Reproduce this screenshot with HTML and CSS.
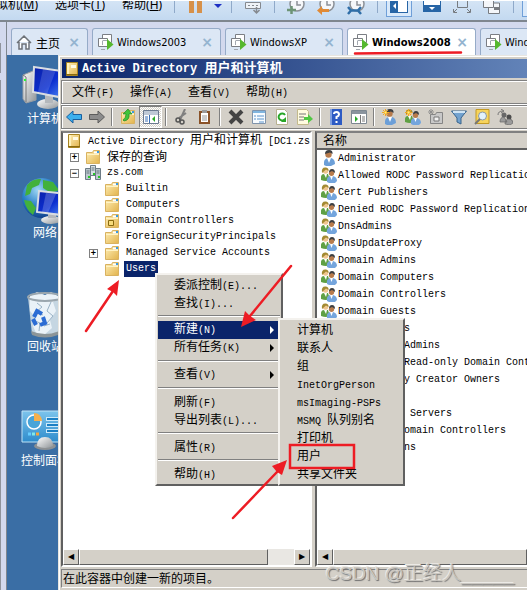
FILE: index.html
```html
<!DOCTYPE html>
<html lang="zh-CN">
<head>
    <meta charset="UTF-8">
    <meta name="viewport" content="width=device-width, initial-scale=1.0">
    <title>Windows2008</title>
    <link rel="stylesheet" href="styles.css">
</head>
<body>
    <!-- Shared icons -->
    <svg class="sprites" aria-hidden="true">
        <defs>
            <linearGradient id="gold" x1="0" y1="0" x2="1" y2="1"><stop offset="0" stop-color="#fff0b8"/><stop offset="1" stop-color="#e2b34c"/></linearGradient>
            <linearGradient id="screen" x1="0" y1="0" x2="1" y2="1"><stop offset="0" stop-color="#0a1fa8"/><stop offset=".5" stop-color="#0c2fd0"/><stop offset="1" stop-color="#5fa0ff"/></linearGradient>
            <linearGradient id="panel" x1="0" y1="0" x2="0" y2="1"><stop offset="0" stop-color="#7cc4ec"/><stop offset="1" stop-color="#2f8ccc"/></linearGradient>
            <radialGradient id="globe" cx=".4" cy=".3" r=".8"><stop offset="0" stop-color="#9fd8f4"/><stop offset=".5" stop-color="#2a7fc8"/><stop offset="1" stop-color="#0b2f7a"/></radialGradient>
            <linearGradient id="metal" x1="0" y1="0" x2="1" y2="1"><stop offset="0" stop-color="#fff"/><stop offset="1" stop-color="#8f9498"/></linearGradient>
        </defs>
        <symbol id="folder" viewBox="0 0 16 16">
            <path d="M1.500 3.500h6l1-2h6v13h-13z" fill="url(#gold)" stroke="#d9b260"/>
            <path d="M9 2.500h5v2H9z" fill="#fff"/><path d="M12 2h2v2h-2z" fill="#3a9be0"/>
            <path d="M2 5.500h12" stroke="#fff3c4"/>
        </symbol>
        <symbol id="book" viewBox="0 0 16 16">
            <path d="M2.500 1.500h11v13h-11z" fill="url(#gold)" stroke="#a88420"/>
            <path d="M3 2h2v11H3z" fill="#fff2bc"/><path d="M7 4h5v3H7z" fill="#fffbe6"/>
            <path d="M2 13.500h12" stroke="#8a6a10"/>
        </symbol>
        <symbol id="domain" viewBox="0 0 16 16">
            <path d="M5.500.5h5v10h-5z" fill="#d8e0e4" stroke="#6d7c86"/>
            <path d="M.5 3.500h5v11h-5zM10.500 3.500h5v11h-5z" fill="#bcc8ce" stroke="#6d7c86"/>
            <path d="M1.500 6h3M1.500 8h3M11.500 6h3M11.500 8h3M6.500 3h3M6.500 5h3" stroke="#66767f"/>
            <path d="M3 11h2v2H3zM13 11h2v2h-2zM8 8h2v2H8z" fill="#28c828"/>
        </symbol>
        <symbol id="user" viewBox="0 0 16 16">
            <path d="M3 15q-1-6 4-7h3q4 1 4 6l-4 2H5z" fill="#6c9fd8"/>
            <path d="M6 8l2 5 2-5z" fill="#fff"/>
            <circle cx="7.500" cy="4.500" r="3.200" fill="#b87b4c"/>
            <path d="M4 4q0-4 4-4t3.500 4L9 2.500z" fill="#3d3f42"/>
        </symbol>
        <symbol id="group" viewBox="0 0 16 16">
            <path d="M0 13q-1-6 3-6h4l2 6q-4 2-9 0z" fill="#5fa044"/>
            <path d="M3 7l2 4 1-4z" fill="#fff"/>
            <circle cx="4.500" cy="4" r="2.800" fill="#efc690"/>
            <path d="M1 6q-1-6 4-5.500Q8 1 7.500 4L5 2.500z" fill="#a38a32"/>
            <path d="M6 15q-1-5 3-6h3q4 1 4 5l-2 2H8z" fill="#74a5dd"/>
            <path d="M9 9l1.500 4L12 9z" fill="#fff"/>
            <circle cx="10.500" cy="6.300" r="2.600" fill="#b87b4c"/>
            <path d="M8 5.500q0-3.500 3-3.500t3 4l-3-2z" fill="#3d3f42"/>
        </symbol>
        <symbol id="spark" viewBox="0 0 16 16">
            <path d="M3.500 0v7M0 3.500h7M1 1l5 5M6 1L1 6" stroke="#f5a81c"/><path d="M2.500 2.500h2v2h-2z" fill="#fff27a"/>
        </symbol>
        <symbol id="vm" viewBox="0 0 18 18">
            <g fill="#fff" stroke="#7b7e84"><path d="M5.500 1.500h9v8h-9z"/><path d="M1.500 5.500h9v8h-9z"/></g>
            <path d="M5.500 7.500h5M5.500 8v4M8 16.500H4" stroke="#a3a8b0" fill="none"/>
            <path d="M10 6l6.500 5.500L10 17z" fill="#55b82e"/>
        </symbol>
        <symbol id="clock" viewBox="0 0 18 20">
            <circle cx="10" cy="3" r="7" fill="#f5f7fa" stroke="#8c9096" stroke-width="1.500"/>
            <path d="M10 0v4h4" fill="none" stroke="#8c9096" stroke-width="1.500"/>
        </symbol>
    </svg>

    <header class="vm-toolbar">
        <nav class="vm-menu">
            <button>拟机(<u>M</u>)</button>
            <button>选项卡(<u>T</u>)</button>
            <button>帮助(<u>H</u>)</button>
        </nav>
        <span class="vm-sep"></span>
        <button class="vm-btn" aria-label="Pause"><svg width="14" height="20"><path d="M0 0h5v12H0zM8 0h5v12H8z" fill="#d7914a"/></svg></button>
        <button class="vm-btn small" aria-label="Power options"><svg width="8" height="20"><path d="M0 3h8L4 7z" fill="#1d2fc4"/></svg></button>
        <span class="vm-sep"></span>
        <button class="vm-btn" aria-label="Send keys"><svg width="18" height="20"><path d="M1.500 1.500h15v6h-15zM4 4.500h2M8 4.500h2M12 4.500h2" fill="#eef2f7" stroke="#85898f"/><path d="M12.500 6v6M9.500 9l3 3 3-3" fill="none" stroke="#85898f" stroke-width="1.500"/></svg></button>
        <span class="vm-sep"></span>
        <button class="vm-btn" aria-label="Take snapshot"><svg width="18" height="20"><use href="#clock"/><path d="M0 9h9M4.500 5v8" stroke="#6d9476" stroke-width="2.500"/></svg></button>
        <button class="vm-btn" aria-label="Revert snapshot"><svg width="18" height="20"><use href="#clock"/><path d="M12 11H5v3L0 9.500 5 5v3h7z" fill="#e08a35"/></svg></button>
        <button class="vm-btn" aria-label="Manage snapshots"><svg width="18" height="20"><use href="#clock"/><path d="M1 6l3 3.500L1 13M14 6l-3 3.500 3 3.500M3 9.500h9" stroke="#2f6ea8" stroke-width="2.500" fill="none"/></svg></button>
        <span class="vm-sep"></span>
        <button class="vm-btn active" aria-label="Show library"><svg width="18" height="20"><path d="M0 0h18v12H0z" fill="#2765a6"/><path d="M8 0h9v11H8z" fill="#fff"/><path d="M6 2L3 5l3 3z" fill="#fff"/></svg></button>
        <button class="vm-btn" aria-label="Thumbnail bar"><svg width="18" height="20"><path d="M0 0h18v11H0z" fill="#2765a6"/><path d="M1 0h16v4H1z" fill="#fff"/><path d="M6 6h6L9 9z" fill="#fff"/></svg></button>
        <button class="vm-btn" aria-label="Full screen"><svg width="18" height="20"><path d="M4.500 0v6.500h10V0M.5 8v3.500H4M17.500 8v3.500H14M1 11l3-3M17 11l-3-3" fill="none" stroke="#777b80"/></svg></button>
        <button class="vm-btn" aria-label="Unity"><svg width="18" height="20"><path d="M5.500 4v8.500h11V2h-6" fill="#f4f6f9" stroke="#777b80"/><path d="M.5 0v6.500h10V0" fill="#f4f6f9" stroke="#777b80"/><path d="M11 6h5v3h-5z" fill="#777b80"/></svg></button>
        <span class="vm-sep"></span>
        <button class="vm-btn active" aria-label="Console view"><svg width="18" height="20"><path d="M1.500-1h16v12h-16z" fill="#fff" stroke="#777b80"/></svg></button>
    </header>

    <div class="workspace">
        <aside class="library-edge"><span></span><span></span></aside>
        <main class="console">
            <nav class="tabs">
                <button class="tab home"><svg width="16" height="17"><path d="M1 9l7-7 7 7M3 8v7h3v-5h4v5h3V8" fill="#fff" stroke="#6d7278" stroke-width="1.500"/></svg><span>主页</span><i>×</i></button>
                <button class="tab"><svg width="18" height="18"><use href="#vm"/></svg><span>Windows2003</span><i>×</i></button>
                <button class="tab narrow"><svg width="18" height="18"><use href="#vm"/></svg><span>WindowsXP</span><i>×</i></button>
                <button class="tab current"><svg width="18" height="18"><use href="#vm"/></svg><span>Windows2008</span><i>×</i></button>
                <button class="tab"><svg width="18" height="18"><use href="#vm"/></svg><span>Windows7</span><i>×</i></button>
            </nav>

            <div class="desktop">
                <div class="desktop-icons">
                    <a href="#" class="shortcut">
                        <svg width="48" height="48">
                            <path d="M2 12l10-4 3 3v26l-10 3-3-4z" fill="url(#metal)" stroke="#9a9ea2"/><path d="M2 12l3 2v25" stroke="#777" fill="none"/><path d="M3 16h2v2H3z" fill="#2f3"/>
                            <ellipse cx="27" cy="41" rx="11" ry="5" fill="url(#metal)"/><path d="M24 32h8v8h-8z" fill="#b4b8bc"/>
                            <path d="M13 4l35 5v27l-36-7z" fill="url(#screen)" stroke="#d9dde2" stroke-width="2"/><path d="M22 6l13 1-9 24-9-2z" fill="#fff" opacity=".15"/>
                        </svg>
                        <span>计算机</span>
                    </a>
                    <a href="#" class="shortcut">
                        <svg width="48" height="48">
                            <circle cx="21" cy="21" r="20" fill="url(#globe)"/>
                            <path d="M6 8q6-7 14-6l-2 6-7 3-2 6-5 2zM22 3l10 2 6 8-8 3-8-5zM3 23l7 1 5 7-3 7q-7-5-9-15z" fill="#42b13c"/>
                            <ellipse cx="30" cy="43" rx="10" ry="4" fill="url(#metal)"/><path d="M27 34h8v7h-8z" fill="#b4b8bc"/>
                            <path d="M18 14l30 3v22l-32-4z" fill="url(#screen)" stroke="#d9dde2" stroke-width="2"/><path d="M25 16l10 1-8 19-6-1z" fill="#fff" opacity=".2"/>
                        </svg>
                        <span>网络</span>
                    </a>
                    <a href="#" class="shortcut">
                        <svg width="48" height="48">
                            <path d="M7 6l4 37q13 6 26 0l4-37z" fill="#c5d6e2"/>
                            <path d="M9 5l7-4 8 3 6-3 9 5-7 5 3 9-6 9 2 8-8 7-8-2-3-7 3-8-6-7z" fill="#eaf2f8"/>
                            <path d="M16 12l5 4-6 5 7 3M30 11l-4 9 6 5-6 7M14 30l5 2-1 8M23 35l6-2" fill="none" stroke="#99b2c6"/>
                            <ellipse cx="24" cy="6" rx="17" ry="4" fill="none" stroke="#9aa6ae" stroke-width="2"/>
                            <path d="M10 40q14 6 28 0l-1 4q-13 5-26 0z" fill="#8c9598"/>
                            <g fill="none" stroke="#2b6cd4" stroke-width="4"><path d="M13 26l3-6 5 3"/><path d="M22 26l2 6-5 2"/><path d="M12 28l3 6"/></g>
                        </svg>
                        <span>回收站</span>
                    </a>
                    <a href="#" class="shortcut">
                        <svg width="48" height="48">
                            <path d="M1 6h47v31H1z" fill="url(#panel)" stroke="#bfe3f6"/>
                            <circle cx="13" cy="17" r="7" fill="#49a4d8" stroke="#fff" stroke-width="1.500"/><path d="M13 16V8q7 0 8 8z" fill="#f6b04c"/>
                            <path d="M25 14h23M25 20h23M25 26h23" stroke="#cdeafa" stroke-width="4"/><path d="M26 14h20M26 20h11M26 26h20" stroke="#1b7fc4" stroke-width="2"/>
                            <path d="M7 29h3" stroke="#6cf" stroke-width="3"/><path d="M11 29h3" stroke="#7fe8e8" stroke-width="3"/><path d="M15 29h3" stroke="#f5a53c" stroke-width="3"/>
                            <ellipse cx="24" cy="41" rx="11" ry="4" fill="#8d9194"/><path d="M16 41q0-9 8-9t8 9q-8 4-16 0z" fill="url(#metal)"/>
                        </svg>
                        <span>控制面板</span>
                    </a>
                </div>

                <section class="window">
                    <h1 class="title-bar"><svg width="16" height="16"><use href="#book"/></svg><span><span class="en">Active Directory </span>用户和计算机</span></h1>
                    <nav class="menu-bar">
                        <button>文件<span class="en">(F)</span></button>
                        <button>操作<span class="en">(A)</span></button>
                        <button>查看<span class="en">(V)</span></button>
                        <button>帮助<span class="en">(H)</span></button>
                    </nav>
                    <div class="tool-bar">
                        <button aria-label="后退"><svg width="16" height="16"><path d="M.5 8L7 2v3.500h8.500v5H7V14z" fill="#3cb0ee" stroke="#1b5f9e"/></svg></button>
                        <button aria-label="前进"><svg width="16" height="16"><path d="M15.500 8L9 2v3.500H.5v5H9V14z" fill="#8c8c8c" stroke="#5c5c5c"/></svg></button>
                        <span class="sep"></span>
                        <button aria-label="上移"><svg width="16" height="16"><use href="#folder"/><path d="M4 12q6-1 5-7h3L8 0 3 5h3q0 4-3 6z" fill="#3fc43a" stroke="#22861f" stroke-width=".7"/></svg></button>
                        <button class="pressed" aria-label="显示控制台树"><svg width="16" height="16"><path d="M.5 1.500h15v13H.5z" fill="#fff" stroke="#6b7a90"/><path d="M1 3h14M1 5h14" stroke="#7f92ad"/><path d="M6.500 6v8M2 8h3M2 10h3M2 12h3" stroke="#3b6fb5"/><path d="M12 7v6l-3-3z" fill="#2aa82a"/></svg></button>
                        <span class="sep"></span>
                        <button aria-label="剪切"><svg width="16" height="16"><path d="M11 0L6 11M12 4L5 9" stroke="#808080" stroke-width="2"/><circle cx="4" cy="11" r="2" fill="none" stroke="#555" stroke-width="1.500"/><circle cx="8" cy="13" r="2" fill="none" stroke="#555" stroke-width="1.500"/></svg></button>
                        <button aria-label="复制"><svg width="16" height="16"><path d="M2 2h11v13H2z" fill="#8a5228"/><path d="M4 4h7v9H4z" fill="#fff"/><path d="M5 1h5v3H5z" fill="#9a9a9a"/><path d="M5 7h5M5 9h5M5 11h5" stroke="#999"/></svg></button>
                        <span class="sep"></span>
                        <button aria-label="删除"><svg width="16" height="16"><path d="M2 2l12 12M14 2L2 14" stroke="#444" stroke-width="4"/></svg></button>
                        <button aria-label="属性"><svg width="16" height="16"><path d="M1.500 1.500h13v13h-13z" fill="#f7fbff" stroke="#7f93ab"/><path d="M2 3h12" stroke="#80b5df" stroke-width="2"/><path d="M3 7h2M3 10h2M6 7h7M6 10h7M8 13h5" stroke="#5a94cc"/></svg></button>
                        <button aria-label="刷新"><svg width="16" height="16"><path d="M2.500.5h8l3 3v12h-11z" fill="#fff" stroke="#b6b08f"/><path d="M11 10a3.500 3.500 0 1 1 0-4" fill="none" stroke="#28a628" stroke-width="2"/><path d="M12 8v5H7z" fill="#28a628"/></svg></button>
                        <button aria-label="导出列表"><svg width="16" height="16"><path d="M.5.5h9l2 2v13H.5z" fill="#fffbe0" stroke="#c2b98c"/><path d="M2 5h7M2 8h5M2 11h5" stroke="#777"/><path d="M7 8h4V5l5 5-5 4v-3H7z" fill="#50c843"/></svg></button>
                        <span class="sep"></span>
                        <button aria-label="帮助"><svg width="16" height="16"><path d="M2 0h12v16H2z" fill="#2d5bc4"/><path d="M2 0h2v16H2z" fill="#7f9fe0"/><path d="M6 5q0-2 2.500-2T11 5.500Q11 7 8.500 8v2M8.500 12v2" fill="none" stroke="#fff" stroke-width="2"/></svg></button>
                        <button aria-label="操作窗格"><svg width="16" height="16"><path d="M.5 1.500h15v13H.5z" fill="#fff" stroke="#7c8791"/><path d="M1 3.500h14" stroke="#8a949e" stroke-width="3"/><path d="M9.500 6v8M11 8h3M11 10h3M11 12h3" stroke="#777"/><path d="M4 7v6l3-3z" fill="#2aa82a"/></svg></button>
                        <span class="sep"></span>
                        <button aria-label="新建用户"><svg width="16" height="16"><use href="#user"/><use href="#spark"/></svg></button>
                        <button aria-label="新建组"><svg width="16" height="16"><use href="#group"/><use href="#spark"/></svg></button>
                        <button aria-label="新建组织单位"><svg width="16" height="16"><path d="M2.500 5.500h5l1-2h6v11h-12z" fill="#c8c8c8" stroke="#858585"/><path d="M6 8h5v4H6z" fill="#f2f2f2" stroke="#777"/><path d="M3 0v6M0 3h6M1 1l4 4M5 1L1 5" stroke="#909090"/></svg></button>
                        <button aria-label="筛选器"><svg width="16" height="16"><path d="M.5 2h15L10 9v6l-4-2V9z" fill="#72a2cf" stroke="#38648c"/><path d="M2 3h12" stroke="#cfe4f4" stroke-width="2"/></svg></button>
                        <button aria-label="查找"><svg width="16" height="16"><path d="M2 .5h13v14H2z" fill="#f7d45c" stroke="#c39a25"/><circle cx="8.500" cy="7" r="4" fill="#e2f2fb" stroke="#8b99a5"/><path d="M6 10l-5 5" stroke="#777" stroke-width="2"/></svg></button>
                        <button aria-label="添加到组"><svg width="16" height="16"><circle cx="7" cy="6" r="2.500" fill="#686868"/><circle cx="12" cy="8" r="2.500" fill="#4c4c4c"/><path d="M3 13q0-5 4-5l3 5zM8 15q0-5 4-5t4 4l-3 2z" fill="#9a9a9a" stroke="#666" stroke-width=".7"/><path d="M1 6q0-4 5-4M4 0l3 2-3 2" fill="none" stroke="#777"/></svg></button>
                    </div>

                    <div class="panes">
                        <div class="pane tree-pane">
                            <ul class="tree">
                                <li class="root"><svg width="16" height="16"><use href="#book"/></svg><span><span class="en">Active Directory </span>用户和计算机<span class="en"> [DC1.zs</span></span></li>
                                <li><button class="expander" aria-label="展开">+</button><svg width="16" height="16"><use href="#folder"/></svg><span>保存的查询</span></li>
                                <li><button class="expander" aria-label="折叠">−</button><svg width="16" height="16"><use href="#domain"/></svg><span class="en">zs.com</span></li>
                                <li class="child"><svg width="16" height="16"><use href="#folder"/></svg><span class="en">Builtin</span></li>
                                <li class="child"><svg width="16" height="16"><use href="#folder"/></svg><span class="en">Computers</span></li>
                                <li class="child"><svg width="16" height="16"><use href="#folder"/><path d="M4.500 7.500h5v5h-5z" fill="#f8dc7c" stroke="#8a6a10"/></svg><span class="en">Domain Controllers</span></li>
                                <li class="child"><svg width="16" height="16"><use href="#folder"/></svg><span class="en">ForeignSecurityPrincipals</span></li>
                                <li class="child expandable"><button class="expander" aria-label="展开">+</button><svg width="16" height="16"><use href="#folder"/></svg><span class="en">Managed Service Accounts</span></li>
                                <li class="child"><svg width="16" height="16"><use href="#folder"/></svg><span class="en selected">Users</span></li>
                            </ul>
                            <div class="scrollbar"><button aria-label="向左">◀</button><span class="thumb"></span><span class="track"></span><button aria-label="向右">▶</button></div>
                        </div>
                        <div class="pane list-pane">
                            <table class="list">
                                <thead><tr><th>名称</th></tr></thead>
                                <tbody class="en">
                                    <tr><td><svg width="16" height="16"><use href="#user"/></svg>Administrator</td></tr>
                                    <tr><td><svg width="16" height="16"><use href="#group"/></svg>Allowed RODC Password Replication Group</td></tr>
                                    <tr><td><svg width="16" height="16"><use href="#group"/></svg>Cert Publishers</td></tr>
                                    <tr><td><svg width="16" height="16"><use href="#group"/></svg>Denied RODC Password Replication Group</td></tr>
                                    <tr><td><svg width="16" height="16"><use href="#group"/></svg>DnsAdmins</td></tr>
                                    <tr><td><svg width="16" height="16"><use href="#group"/></svg>DnsUpdateProxy</td></tr>
                                    <tr><td><svg width="16" height="16"><use href="#group"/></svg>Domain Admins</td></tr>
                                    <tr><td><svg width="16" height="16"><use href="#group"/></svg>Domain Computers</td></tr>
                                    <tr><td><svg width="16" height="16"><use href="#group"/></svg>Domain Controllers</td></tr>
                                    <tr><td><svg width="16" height="16"><use href="#group"/></svg>Domain Guests</td></tr>
                                    <tr><td><svg width="16" height="16"><use href="#group"/></svg>Domain Users</td></tr>
                                    <tr><td><svg width="16" height="16"><use href="#group"/></svg>Enterprise Admins</td></tr>
                                    <tr><td><svg width="16" height="16"><use href="#group"/></svg>Enterprise Read-only Domain Controllers</td></tr>
                                    <tr><td><svg width="16" height="16"><use href="#group"/></svg>Group Policy Creator Owners</td></tr>
                                    <tr><td><svg width="16" height="16"><use href="#user"/></svg>Guest</td></tr>
                                    <tr><td><svg width="16" height="16"><use href="#group"/></svg>RAS and IAS Servers</td></tr>
                                    <tr><td><svg width="16" height="16"><use href="#group"/></svg>Read-only Domain Controllers</td></tr>
                                    <tr><td><svg width="16" height="16"><use href="#group"/></svg>Schema Admins</td></tr>
                                </tbody>
                            </table>
                            <div class="scrollbar"><button aria-label="向左">◀</button><span class="thumb full"></span></div>
                        </div>
                    </div>
                    <footer class="status-bar">在此容器中创建一新的项目。</footer>
                </section>
            </div>
        </main>
    </div>

    <!-- Context menu of the Users container -->
    <div class="popup context-menu" role="menu">
        <button role="menuitem">委派控制<span class="en">(E)...</span></button>
        <button role="menuitem">查找<span class="en">(I)...</span></button>
        <hr>
        <button role="menuitem" class="sub highlighted"><span>新建<span class="en">(N)</span></span></button>
        <button role="menuitem" class="sub"><span>所有任务<span class="en">(K)</span></span></button>
        <hr>
        <button role="menuitem" class="sub"><span>查看<span class="en">(V)</span></span></button>
        <hr>
        <button role="menuitem">刷新<span class="en">(F)</span></button>
        <button role="menuitem">导出列表<span class="en">(L)...</span></button>
        <hr>
        <button role="menuitem">属性<span class="en">(R)</span></button>
        <hr>
        <button role="menuitem">帮助<span class="en">(H)</span></button>
    </div>
    <div class="popup new-menu" role="menu">
        <button role="menuitem">计算机</button>
        <button role="menuitem">联系人</button>
        <button role="menuitem">组</button>
        <button role="menuitem"><span class="en">InetOrgPerson</span></button>
        <button role="menuitem"><span class="en">msImaging-PSPs</span></button>
        <button role="menuitem"><span class="en">MSMQ </span>队列别名</button>
        <button role="menuitem">打印机</button>
        <button role="menuitem">用户</button>
        <button role="menuitem">共享文件夹</button>
    </div>

    <!-- Red marks: tab underline, arrows, box round 用户 -->
    <svg class="marks" width="528" height="593" aria-hidden="true">
        <g fill="none" stroke="#ed1c24" stroke-linecap="round">
            <path d="M355 53.500L400 53l61-.5" stroke-width="2.500"/>
            <path d="M86 331l27-40M291 266l-41 50M233 518l44-46" stroke-width="2.500"/>
            <path d="M290 445h64v23h-64z" stroke-width="2.500"/>
        </g>
        <g fill="#ed1c24">
            <path d="M119 280l-2 16-4-4-6-3z"/>
            <path d="M241 327l4-16 5 5 6 4z"/>
            <path d="M287 460l-5 15-5-3-5-6z"/>
        </g>
    </svg>
    <div class="watermark">CSDN @正经人_____</div>
</body>
</html>
```
FILE: styles.css
```css
* {
    box-sizing: border-box;
}

body {
    position: relative;
    display: flex;
    flex-direction: column;
    min-height: 100vh;
    margin: 0;
    padding: 1px 1px 3px 0;
    overflow: hidden;
    background-color: #fff;
    font-family: "Liberation Sans", "Noto Sans CJK SC", sans-serif;
    font-size: 12px;
    color: #000;
}

button {
    margin: 0;
    padding: 0;
    border: none;
    background: none;
    font: inherit;
    color: inherit;
    white-space: nowrap;
}

svg {
    flex: none;
}

/* Latin text beside 12px Chinese text */
.en {
    font-family: "Liberation Mono", monospace;
    font-size: 10px;
    white-space: pre;
}

.sprites {
    position: absolute;
    width: 0;
    height: 0;
}

/* Virtual machine toolbar */
.vm-toolbar {
    display: flex;
    height: 21px;
    overflow: hidden;
    background: linear-gradient(#d4e4f5, #c3d9f0);
    border-bottom: 2px solid #7f868f;
}

.vm-menu {
    display: flex;
    gap: 17px;
    width: 172px;
    flex: none;
    margin: -5px 0 0 -4px;
    font-family: "Noto Sans", "Noto Sans CJK SC", sans-serif;
    line-height: 18px;
}

.vm-menu button {
    display: block;
    height: 18px;
}

.vm-sep {
    flex: none;
    width: 1px;
    height: 12px;
    margin: 0 6px;
    background-color: #8fa9c9;
}

.vm-btn {
    display: flex;
    justify-content: center;
    flex: none;
    width: 30px;
    height: 17px;
}

.vm-btn.small {
    width: 14px;
}

.vm-btn.active {
    width: 26px;
    height: 16px;
    margin-right: 5px;
    margin-left: 2px;
    border: 1px solid #6f9fd8;
    border-top: none;
    background-color: #d9e9fa;
}

.workspace {
    display: flex;
    flex: 1;
    background-color: #d3d9ee;
}

.library-edge {
    display: flex;
    flex-direction: column;
    gap: 7px;
    width: 7px;
    padding-top: 21px;
    border-right: 1px solid #7f868f;
}

.library-edge span {
    width: 1px;
    height: 30px;
    background-color: #8f939c;
}

.library-edge span:last-child {
    flex: 1;
}

.console {
    display: flex;
    flex-direction: column;
    flex: 1;
    min-width: 0;
}

.tabs {
    display: flex;
    gap: 4px;
    padding: 6px 0 0 4px;
    overflow: hidden;
}

.tab {
    display: flex;
    align-items: center;
    gap: 2px;
    flex: none;
    width: 129px;
    height: 27px;
    padding: 0 7px 0 4px;
    border: 1px solid #96abc8;
    border-bottom: none;
    border-radius: 3px 3px 0 0;
    background-color: #dce7f5;
    font-family: "DejaVu Sans Condensed", "DejaVu Sans", sans-serif;
    font-size: 11px;
}

.tab.home {
    gap: 4px;
    width: 77px;
    font-family: "Noto Sans CJK SC", sans-serif;
    font-size: 12px;
}

.tab.narrow {
    width: 118px;
}

.tab.current {
    background-color: #fff;
    font-family: "DejaVu Sans", sans-serif;
    font-weight: bold;
    font-size: 10px;
}

.tab i {
    margin-left: auto;
    font-family: "DejaVu Sans", sans-serif;
    font-style: normal;
    font-weight: bold;
    font-size: 14px;
    color: #94b4d0;
}

/* Guest desktop */
.desktop {
    display: flex;
    flex: 1;
    background-color: #3a6ea5;
}

.desktop-icons {
    display: flex;
    flex-direction: column;
    gap: 50px;
    flex: none;
    width: 51px;
    padding-top: 8px;
    overflow: hidden;
}

.shortcut {
    display: flex;
    flex-direction: column;
    align-items: center;
    width: 76px;
    color: #fff;
    line-height: 16px;
    text-decoration: none;
}

.window {
    display: flex;
    flex-direction: column;
    flex: 1;
    min-width: 0;
    padding: 2px 0 2px 2px;
    border-top: 1px solid #e8e6e0;
    border-left: 1px solid #e8e6e0;
    box-shadow: inset 1px 1px #fff;
    background-color: #d4d0c8;
}

.title-bar {
    display: flex;
    align-items: center;
    height: 19px;
    margin: 1px 0 2px 1px;
    padding-left: 2px;
    background: linear-gradient(to right, #0a246a, #6283b8);
    font-size: 13px;
    line-height: 19px;
    color: #fff;
}

.title-bar svg {
    margin-right: 2px;
}

.title-bar .en {
    font-size: 12px;
}

.menu-bar,
.tool-bar {
    display: flex;
    height: 24px;
    border: 1px solid #808080;
    border-right: none;
    box-shadow: inset 1px 1px #fff, 0 1px #fff;
}

.menu-bar {
    gap: 16px;
    padding: 0 0 3px 10px;
    margin-bottom: 1px;
}

.tool-bar {
    align-items: center;
    margin-bottom: 2px;
    overflow: hidden;
}

.tool-bar button {
    display: flex;
    align-items: center;
    justify-content: center;
    flex: none;
    width: 23px;
    height: 22px;
}

.tool-bar .pressed {
    border: 1px solid;
    border-color: #808080 #fff #fff #808080;
    background: repeating-conic-gradient(#fff 0 25%, #d4d0c8 0 50%) 0 0 / 2px 2px;
}

.sep {
    flex: none;
    width: 2px;
    height: 18px;
    margin: 0 3px;
    border-left: 1px solid #808080;
    background-color: #fff;
}

.panes {
    display: flex;
    gap: 3px;
    flex: 1;
    margin-bottom: 2px;
}

.pane {
    display: flex;
    flex-direction: column;
    min-width: 0;
    overflow: hidden;
    border: 2px solid;
    border-color: #808080 #fff #fff #606060;
    background-color: #fff;
}

.tree-pane {
    flex: none;
    width: 251px;
}

.list-pane {
    flex: 1;
    border-right: none;
}

.tree {
    flex: 1;
    margin: 0;
    padding: 0 0 0 7px;
    list-style: none;
}

.tree li {
    display: flex;
    align-items: center;
    height: 16px;
    line-height: 16px;
    white-space: nowrap;
}

.tree li > svg {
    margin-right: 6px;
}

.tree .root {
    margin-left: -4px;
}

.tree .child {
    padding-left: 34px;
}

.tree .expandable {
    padding-left: 19px;
}

.expander {
    width: 9px;
    height: 9px;
    margin-right: 6px;
    border: 1px solid #808080;
    font-size: 9px;
    font-weight: bold;
    line-height: 7px;
}

.selected {
    margin-left: -2px;
    padding: 0 2px;
    background-color: #0a246a;
    color: #fff;
}

.list {
    width: 100%;
    margin-bottom: auto;
    border-collapse: collapse;
    table-layout: fixed;
}

.list th {
    height: 16px;
    padding: 0 0 0 6px;
    border-bottom: 2px solid #606060;
    background-color: #d4d0c8;
    font-weight: normal;
    line-height: 14px;
    text-align: left;
}

.list td {
    height: 17px;
    padding: 0 0 0 4px;
    overflow: hidden;
    line-height: 17px;
    white-space: nowrap;
}

.list td svg {
    margin-right: 1px;
    vertical-align: top;
}

.scrollbar {
    display: flex;
    height: 16px;
    background-color: #e9e7e3;
}

.scrollbar button,
.thumb {
    flex: none;
    width: 16px;
    border: 1px solid;
    border-color: #fff #606060 #606060 #fff;
    background-color: #d4d0c8;
    font-family: "DejaVu Sans", sans-serif;
    font-size: 8px;
    line-height: 14px;
}

.thumb {
    width: 189px;
}

.thumb.full {
    flex: 1;
}

.track {
    flex: 1;
}

.status-bar {
    height: 19px;
    padding-left: 1px;
    border-top: 1px solid #808080;
    border-bottom: 1px solid #fff;
    border-left: 1px solid #808080;
    line-height: 18px;
}

/* Popup menus */
.popup {
    position: absolute;
    padding: 1px;
    border: 2px solid;
    border-color: #f4f2ee #606060 #606060 #f4f2ee;
    background-color: #d4d0c8;
}

.context-menu {
    top: 273px;
    left: 155px;
    width: 128px;
}

.new-menu {
    top: 318px;
    left: 278px;
    width: 127px;
}

.popup button {
    display: block;
    width: 100%;
    height: 18px;
    padding-left: 16px;
    line-height: 18px;
    text-align: left;
}

.popup hr {
    height: 2px;
    margin: 3px 0 4px;
    border: none;
    border-top: 1px solid #808080;
    background-color: #fff;
}

.popup .sub {
    display: flex;
    align-items: center;
}

.popup .sub::after {
    content: "";
    margin: 0 6px 0 auto;
    border: 4px solid transparent;
    border-right: none;
    border-left-color: currentColor;
}

.popup .highlighted {
    background-color: #0a246a;
    color: #fff;
}

.marks {
    position: absolute;
    top: 0;
    left: 0;
    pointer-events: none;
}

.watermark {
    position: absolute;
    right: 14px;
    bottom: 6px;
    font-size: 19px;
    font-weight: 300;
    line-height: 26px;
    color: #c9c6c0;
    text-shadow: 1px 1px 1px #707070, -1px -1px #eceae6;
}
```
